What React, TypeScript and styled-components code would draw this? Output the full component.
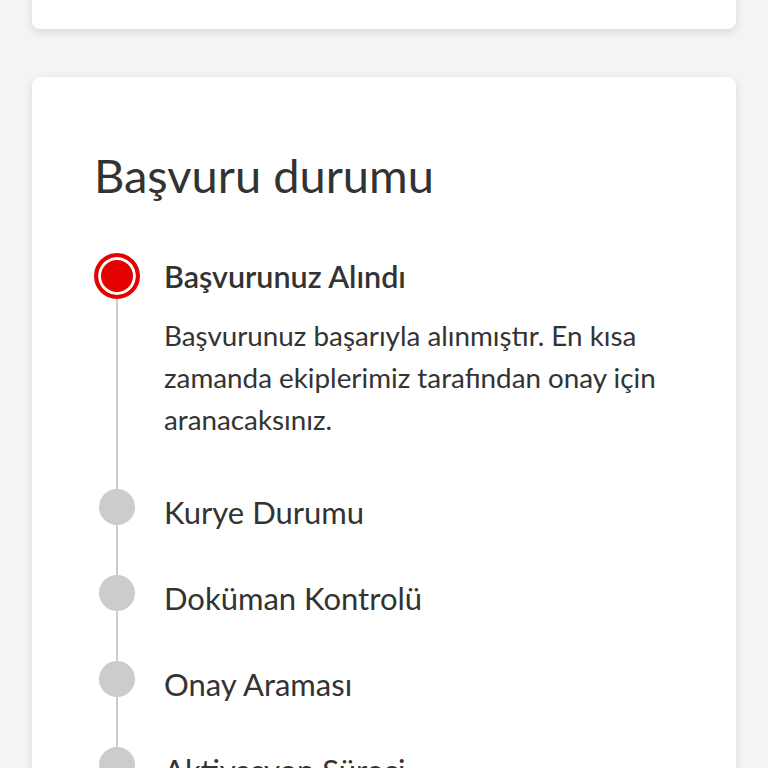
import React from "react";
import styled, { createGlobalStyle } from "styled-components";

const Global = createGlobalStyle`
  html, body { margin: 0; padding: 0; background: #f4f4f4; }
  body { font-family: "Lato", "Open Sans", sans-serif; color: #333; overflow: hidden; }
`;

const Page = styled.div`
  padding: 0 32px;
  display: flex;
  flex-direction: column;
  gap: 48px;
`;

const Card = styled.section`
  background: #fff;
  border-radius: 8px;
  box-shadow: 0 3px 10px rgba(0, 0, 0, 0.12);
`;

const TopCard = styled(Card)`
  margin-top: -40px;
  height: 69px;
`;

const StatusCard = styled(Card)`
  padding: 66px 62px 60px;
`;

const Heading = styled.h2`
  margin: 0 0 46px;
  font-size: 47px;
  font-weight: 400;
  line-height: 64px;
  color: #333;
`;

const Steps = styled.ol`
  list-style: none;
  margin: 0;
  padding: 0;
`;

const Step = styled.li`
  display: grid;
  grid-template-columns: 46px 1fr;
  column-gap: 24px;
`;

const Marker = styled.div`
  display: flex;
  flex-direction: column;
  align-items: center;
`;

const Dot = styled.span<{ $active?: boolean }>`
  box-sizing: border-box;
  flex: none;
  border-radius: 50%;
  width: ${(p) => (p.$active ? "46px" : "36px")};
  height: ${(p) => (p.$active ? "46px" : "36px")};
  background: ${(p) => (p.$active ? "#e60000" : "#cccccc")};
  border: ${(p) => (p.$active ? "4px solid #e60000" : "none")};
  box-shadow: ${(p) => (p.$active ? "inset 0 0 0 3px #fff" : "none")};
`;

const Connector = styled.span`
  flex: 1;
  width: 2px;
  background: #cccccc;
`;

const Content = styled.div`
  padding-bottom: 40px;
`;

const Title = styled.div<{ $active?: boolean }>`
  font-size: ${(p) => (p.$active ? "30.5px" : "31px")};
  line-height: 46px;
  font-weight: ${(p) => (p.$active ? 600 : 400)};
  color: #333;
`;

const Body = styled.p`
  margin: 16px 0 8px;
  font-size: 27.8px;
  line-height: 42px;
  color: #333;
`;

const steps = [
  {
    title: "Başvurunuz Alındı",
    body: "Başvurunuz başarıyla alınmıştır. En kısa zamanda ekiplerimiz tarafından onay için aranacaksınız.",
    active: true,
  },
  { title: "Kurye Durumu" },
  { title: "Doküman Kontrolü" },
  { title: "Onay Araması" },
  { title: "Aktivasyon Süreci" },
];

export default function App() {
  return (
    <>
      <Global />
      <Page>
        <TopCard />
        <StatusCard>
          <Heading>Başvuru durumu</Heading>
          <Steps>
            {steps.map((s) => (
              <Step key={s.title}>
                <Marker>
                  <Dot $active={s.active} />
                  <Connector />
                </Marker>
                <Content>
                  <Title $active={s.active}>{s.title}</Title>
                  {s.body && <Body>{s.body}</Body>}
                </Content>
              </Step>
            ))}
          </Steps>
        </StatusCard>
      </Page>
    </>
  );
}
